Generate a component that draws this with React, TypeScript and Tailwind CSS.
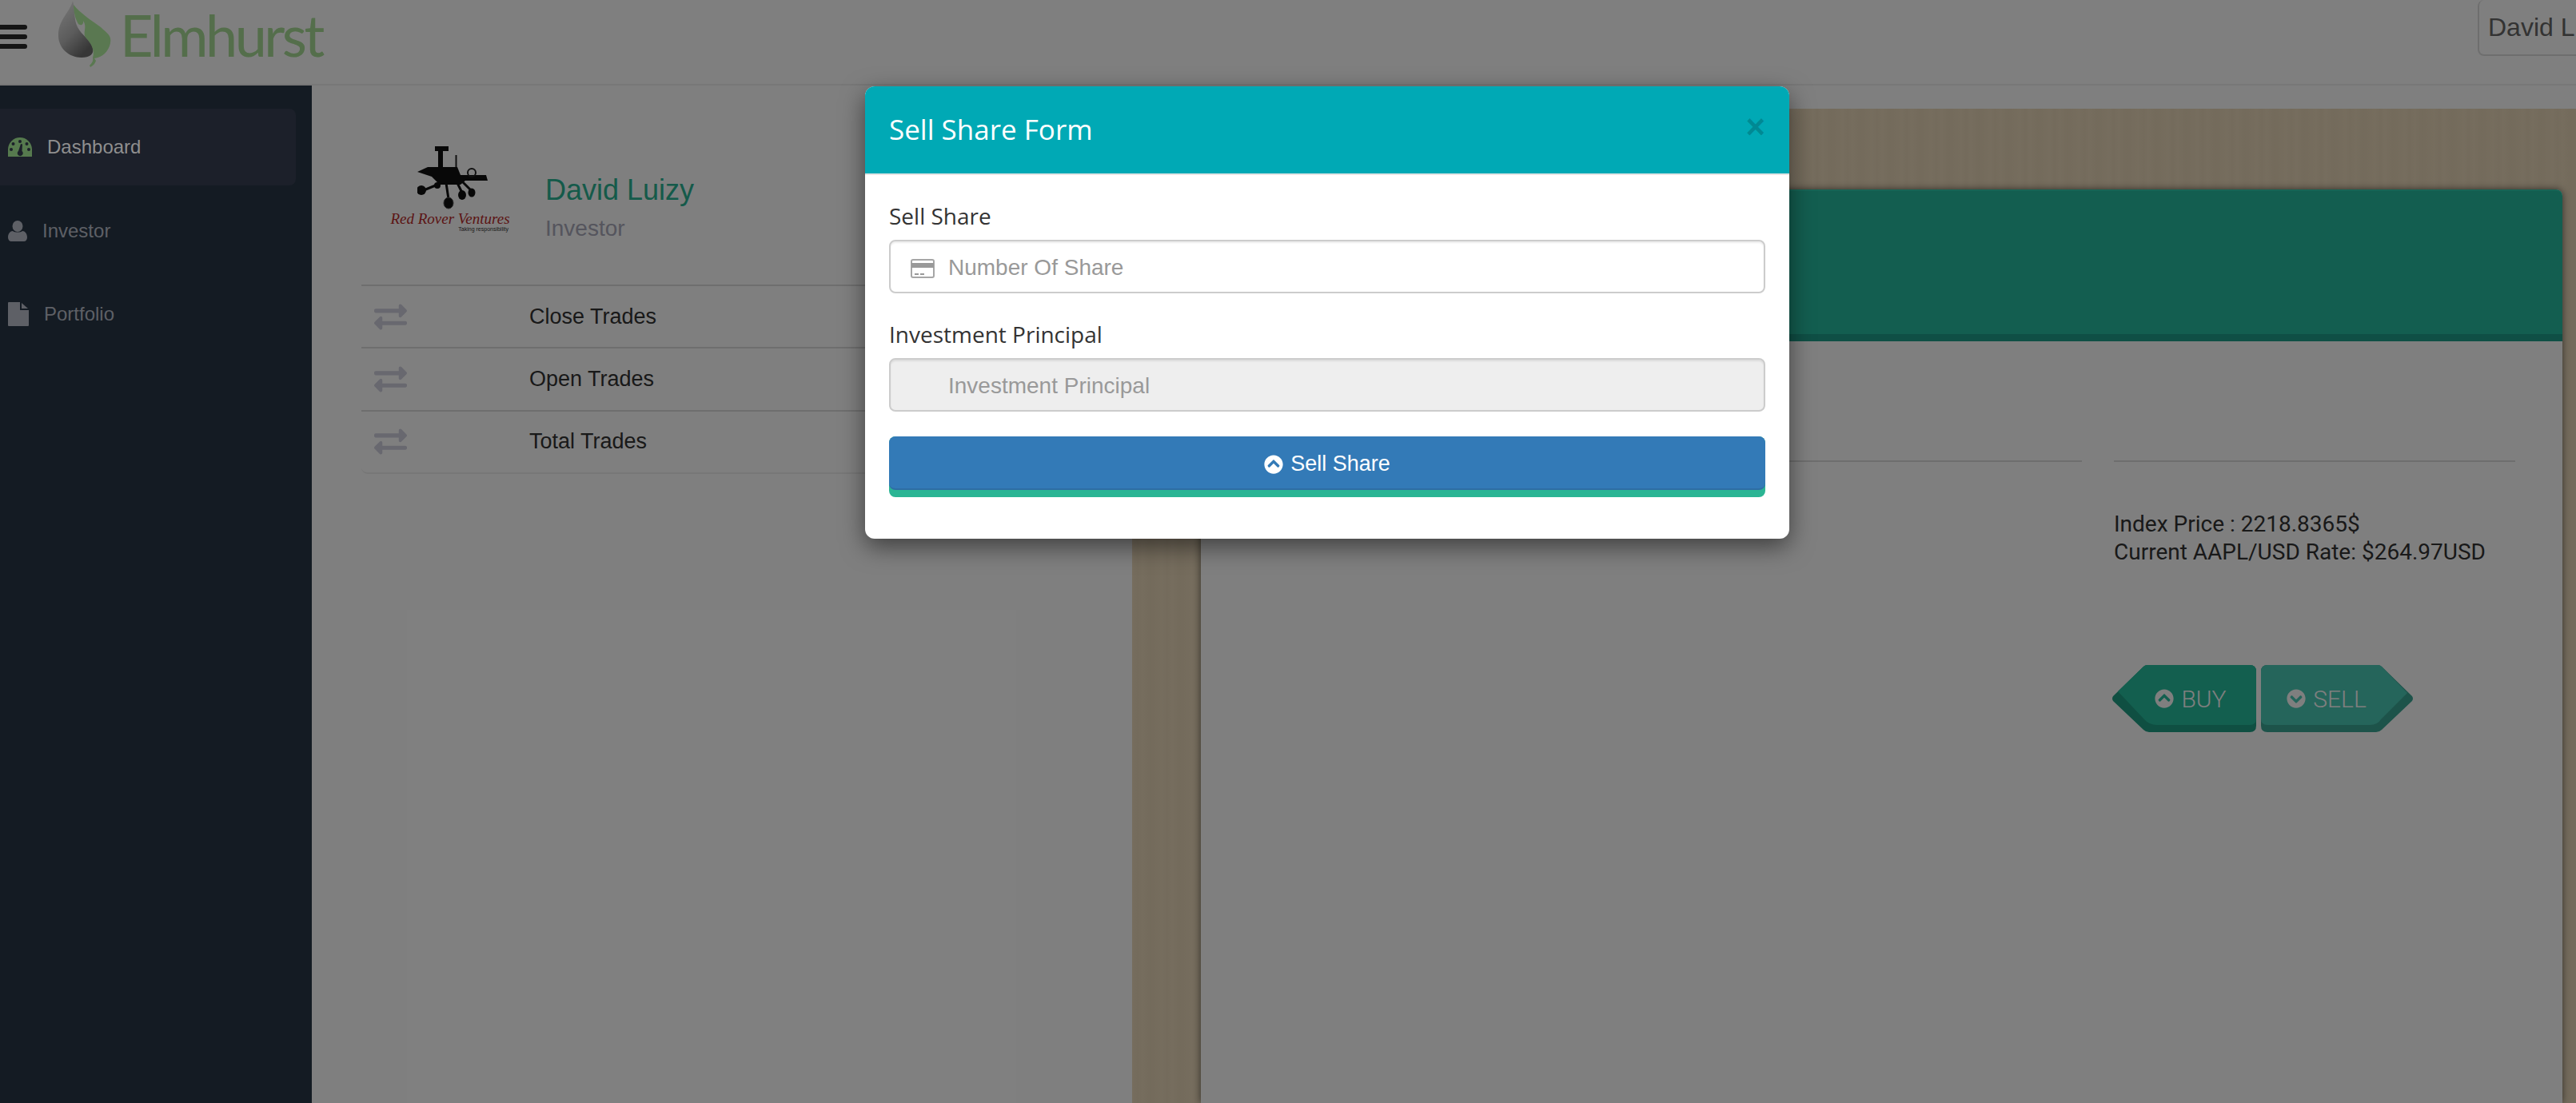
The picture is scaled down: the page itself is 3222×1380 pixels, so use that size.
import React from 'react';
import { FaChevronCircleDown, FaChevronCircleUp, FaExchangeAlt } from 'react-icons/fa';

const trades = ['Close Trades', 'Open Trades', 'Total Trades'];

const LeafLogo = () => (
  <svg width="72" height="86" viewBox="0 0 72 86" className="shrink-0">
    <defs>
      <linearGradient id="drop" x1="0" y1="0" x2="0.6" y2="1">
        <stop offset="0" stopColor="#f4f4f4" />
        <stop offset="0.6" stopColor="#b8b8b8" />
        <stop offset="1" stopColor="#6e6e6e" />
      </linearGradient>
    </defs>
    <path d="M19 1C16 14 2 24 1 42C0 60 14 72 30 72C40 72 46 68 44 60C42 50 30 44 25 34C20 24 22 12 19 1Z" fill="url(#drop)" />
    <path d="M20 6C28 16 40 24 54 34C62 42 68 44 66 54C64 64 56 72 46 73L48 76C47 79 45 82 41 84L40 82C43 79 45 76 44 72C47 64 42 54 36 48C30 42 38 34 32 26C33 32 28 32 26 30C22 24 20 14 20 6Z" fill="#b4f0a2" />
  </svg>
);

const RoverLogo = () => (
  <div className="flex flex-col items-center w-[146px] shrink-0 mt-[3px]">
    <svg width="90" height="80" viewBox="0 0 90 80" className="ml-[8px]">
      <rect x="22" y="0" width="17" height="6" fill="#111" />
      <rect x="26" y="5" width="6" height="28" fill="#111" />
      <rect x="47.5" y="11" width="2" height="24" fill="#222" />
      <path d="M0 32L13 26H50L54 36H86L88 43H60L54 48H28L18 38Z" fill="#111" />
      <circle cx="68" cy="33" r="5" fill="none" stroke="#222" strokeWidth="2" />
      <path d="M30 46L8 55M36 46L39 66M50 46L56 58M56 44L68 56" fill="none" stroke="#111" strokeWidth="3" />
      <circle cx="5" cy="55" r="6" fill="#111" />
      <circle cx="25" cy="49" r="4" fill="#111" />
      <ellipse cx="39" cy="71" rx="6" ry="7" fill="#111" stroke="#555" />
      <ellipse cx="56" cy="61" rx="5" ry="6" fill="#111" />
      <ellipse cx="68" cy="58" rx="4.5" ry="5.5" fill="#111" />
    </svg>
    <span className="mt-[1px] font-['Liberation_Serif',serif] italic text-[19px] leading-[20px] text-[#b82a2a] whitespace-nowrap">Red Rover Ventures</span>
    <span className="self-end font-['Liberation_Sans',sans-serif] text-[7px] leading-[6px] text-[#333] whitespace-nowrap">Taking responsibility</span>
  </div>
);

const BuyButton = () => (
  <button className="relative w-[180px] h-[84px] text-white">
    <svg width="180" height="84" viewBox="0 0 180 84" className="absolute inset-0">
      <path d="M1 39L39 2Q41 0 44 0H172Q180 0 180 8V76Q180 84 172 84H46Q42 84 39 81L1 45Q-1 42 1 39Z" fill="#1f9e84" />
      <path d="M7 33L39 2Q41 0 44 0H172Q180 0 180 8V67Q180 75 172 75H56Q46 75 40 68Z" fill="#26bf9e" />
    </svg>
    <span className="relative flex items-center justify-center gap-[9px] pl-[16px] h-full font-['Roboto',sans-serif] font-light text-[30px]">
      <FaChevronCircleUp className="text-[24px]" />
      BUY
    </span>
  </button>
);

const SellButton = () => (
  <button className="relative w-[190px] h-[84px] text-white">
    <svg width="190" height="84" viewBox="0 0 190 84" className="absolute inset-0">
      <path d="M189 39L151 2Q149 0 146 0H8Q0 0 0 8V76Q0 84 8 84H144Q148 84 151 81L189 45Q191 42 189 39Z" fill="#3aa695" />
      <path d="M183 35L151 2Q149 0 146 0H8Q0 0 0 8V67Q0 75 8 75H136Q146 75 150 68Z" fill="#4bcab6" />
    </svg>
    <span className="relative flex items-center justify-center gap-[9px] pr-[26px] h-full font-['Roboto',sans-serif] font-light text-[30px]">
      <FaChevronCircleDown className="text-[24px]" />
      SELL
    </span>
  </button>
);

const App: React.FC = () => {
  return (
    <div className="relative w-[3222px] h-[1380px] overflow-hidden bg-white font-['Liberation_Sans',sans-serif]">
      <header className="flex items-start h-[107px] border-b-2 border-[#eeeeee]">
        <div className="flex flex-col gap-[6px] w-[34px] mt-[31px] shrink-0">
          <span className="h-[6px] rounded-r-sm bg-[#2a2a2a]"></span>
          <span className="h-[6px] rounded-r-sm bg-[#2a2a2a]"></span>
          <span className="h-[6px] rounded-r-sm bg-[#2a2a2a]"></span>
        </div>
        <div className="ml-[38px]">
          <LeafLogo />
        </div>
        <span className="ml-[6px] font-['Lato',sans-serif] font-normal text-[72px] leading-[86px] tracking-[-3.5px] text-[#a8dc96]">Elmhurst</span>
        <div className="ml-auto w-[240px] -mr-[117px] h-[70px] shrink-0 flex items-center px-[11px] border-2 border-t-0 border-[#dddddd] rounded-lg text-[32px] text-[#666666] whitespace-nowrap">
          David Luizy
        </div>
      </header>

      <div className="flex h-[1273px]">
        <aside className="relative z-10 w-[390px] shrink-0 pt-[29px] bg-[#141b23] text-[24px]">
          <div className="flex items-center h-[96px] w-[370px] pl-[10px] gap-[19px] rounded-r-lg bg-[#1c202a] text-[#8f8f8f]">
            <svg width="30" height="24" viewBox="0 0 30 24" className="shrink-0">
              <path d="M0 24V15A15 15 0 0 1 30 15V24Z" fill="#567a4e" />
              <circle cx="15" cy="5" r="2" fill="#1c202a" />
              <circle cx="6.5" cy="8" r="2" fill="#1c202a" />
              <circle cx="23.5" cy="8" r="2" fill="#1c202a" />
              <circle cx="4" cy="15" r="2" fill="#1c202a" />
              <circle cx="26" cy="15" r="2" fill="#1c202a" />
              <path d="M16 8L18 8.5L17.5 17A3.5 3.5 0 1 1 13 17Z" fill="#1c202a" />
            </svg>
            Dashboard
          </div>
          <div className="flex items-center h-[32px] mt-[41px] pl-[10px] gap-[19px] text-[#5e6066]">
            <svg width="24" height="26" viewBox="0 0 24 26" className="shrink-0">
              <ellipse cx="12" cy="7" rx="6.5" ry="7" fill="#5e6066" />
              <path d="M0 21C0 16 3 13 6 13C8 15 16 15 18 13C21 13 24 16 24 21C24 24 22 26 20 26H4C2 26 0 24 0 21Z" fill="#5e6066" />
            </svg>
            Investor
          </div>
          <div className="flex items-center h-[32px] mt-[72px] pl-[10px] gap-[19px] text-[#5e6066]">
            <svg width="26" height="30" viewBox="0 0 26 30" className="shrink-0">
              <path d="M1 0H15V10H26V29Q26 30 25 30H1Q0 30 0 29V1Q0 0 1 0Z" fill="#5e6066" />
              <path d="M17 1L25 8H17Z" fill="#5e6066" />
            </svg>
            Portfolio
          </div>
        </aside>

        <section className="w-[1026px] shrink-0 pl-[62px] pr-[36px] pt-[73px]">
          <div className="flex items-start pl-[38px] h-[105px]">
            <RoverLogo />
            <div className="ml-[46px] mt-[36px]">
              <div className="text-[36px] leading-[44px] text-[#2bb594]">David Luizy</div>
              <div className="text-[28px] leading-[38px] mt-[7px] text-[#aaaabb]">Investor</div>
            </div>
          </div>
          <div className="mt-[71px] border-b-2 border-[#eeeeee] rounded-b-lg">
            {trades.map((label) => (
              <div key={label} className="flex items-center h-[78.3px] pl-[16px] border-t-2 border-[#dddddd] text-[27px] text-[#333333]">
                <FaExchangeAlt className="w-[41px] h-[41px] text-[#d0d0de]" />
                <span className="ml-[153px]">{label}</span>
              </div>
            ))}
          </div>
        </section>

        <section className="flex-1 mt-[29px] pl-[86px] pr-[17px] pt-[101px] bg-[#ecdabb] bg-[repeating-linear-gradient(90deg,rgba(255,255,255,0.03)_0px,rgba(0,0,0,0.015)_7px,rgba(255,255,255,0.025)_13px,rgba(0,0,0,0.02)_23px,rgba(255,255,255,0.01)_37px)]">
          <div className="h-full rounded-t-lg bg-white shadow-[0_0_10px_rgba(0,0,0,0.6)]">
            <div className="h-[190px] rounded-t-lg bg-[#26bca0] border-t-2 border-b-[9px] border-t-[#2fc9ab] border-b-[#1e9e8a]"></div>
            <div className="flex pt-[149px] pl-[28px] gap-[40px]">
              <div className="w-[1074px] h-[2px] bg-[#dddddd]"></div>
              <div className="w-[502px]">
                <div className="h-[2px] bg-[#dddddd]"></div>
                <div className="mt-[60px] font-['Roboto',sans-serif] text-[28px] leading-[35px] text-[#333333] whitespace-nowrap">
                  <div>Index Price : 2218.8365$</div>
                  <div>Current AAPL/USD Rate: $264.97USD</div>
                </div>
                <div className="flex gap-[6px] mt-[124px] -ml-[2px]">
                  <BuyButton />
                  <SellButton />
                </div>
              </div>
            </div>
          </div>
        </section>
      </div>

      {/* modal backdrop */}
      <div className="absolute inset-0 bg-black/50"></div>

      <div className="absolute z-20 left-[1082px] top-[108px] w-[1156px] h-[566px] rounded-xl bg-white shadow-[0_10px_30px_rgba(0,0,0,0.5)] overflow-hidden">
        <div className="flex items-center justify-between h-[111px] pl-[30px] pr-[30px] border-b-2 border-[#e5e5e5] bg-[#00a9b5]">
          <h4 className="font-['Open_Sans',sans-serif] text-[35px] text-white">Sell Share Form</h4>
          <span className="mb-[8px] text-[42px] font-bold leading-none text-black/20">×</span>
        </div>
        <form className="px-[30px] pt-[31px] font-['Open_Sans',sans-serif]">
          <label className="block text-[28px] leading-[40px] text-[#333333]">Sell Share</label>
          <div className="relative mt-[10px]">
            <svg width="30" height="24" viewBox="0 0 30 24" className="absolute left-[27px] top-[24px]">
              <rect x="1" y="1" width="28" height="22" rx="2" fill="none" stroke="#a6a6a6" strokeWidth="2" />
              <rect x="1" y="5" width="28" height="6" fill="#999999" />
              <rect x="5" y="18" width="5" height="2" fill="#999999" />
              <rect x="12" y="18" width="5" height="2" fill="#999999" />
            </svg>
            <input
              placeholder="Number Of Share"
              className="w-full h-[67px] pl-[72px] pt-[2px] rounded-lg border-2 border-[#cccccc] bg-white font-['Liberation_Sans',sans-serif] text-[28px] shadow-[inset_0_2px_2px_rgba(0,0,0,0.075)] placeholder:text-[#999999]"
            />
          </div>
          <label className="block mt-[31px] text-[28px] leading-[40px] text-[#333333]">Investment Principal</label>
          <input
            disabled
            placeholder="Investment Principal"
            className="block w-full h-[67px] mt-[10px] pl-[72px] pt-[2px] rounded-lg border-2 border-[#cccccc] bg-[#eeeeee] font-['Liberation_Sans',sans-serif] text-[28px] shadow-[inset_0_2px_2px_rgba(0,0,0,0.075)] placeholder:text-[#999999]"
          />
          <div className="mt-[31px] rounded-lg bg-[#2bb594] pb-[9px]">
            <button type="button" className="flex items-center justify-center gap-[9px] w-full h-[67px] pt-[4px] rounded-lg border-b-2 border-[#2e6da4] bg-[#337ab7] font-['Liberation_Sans',sans-serif] text-[27px] text-white">
              <FaChevronCircleUp className="text-[24px]" />
              Sell Share
            </button>
          </div>
        </form>
      </div>
    </div>
  );
};

export default App;
